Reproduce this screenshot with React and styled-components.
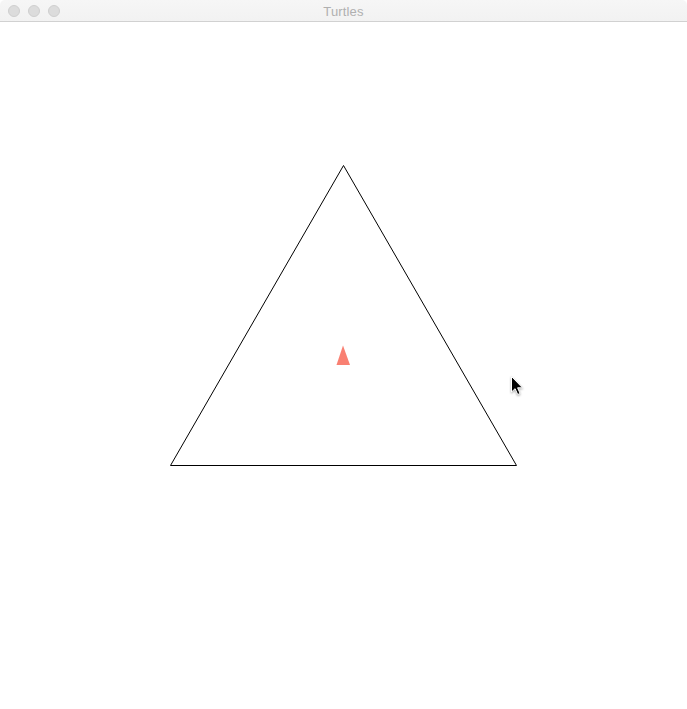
import React from "react";
import styled, { createGlobalStyle } from "styled-components";

const Global = createGlobalStyle`
  html, body { margin: 0; padding: 0; background: #ffffff; overflow: hidden; }
  #root { width: 687px; height: 709px; }
`;

const Window = styled.div`
  width: 687px;
  height: 709px;
  display: flex;
  flex-direction: column;
  background: #ffffff;
`;

const TitleBar = styled.div`
  position: relative;
  height: 21px;
  flex: 0 0 21px;
  background: linear-gradient(#f6f6f6, #f2f2f2);
  border-bottom: 1px solid #d1d1d1;
  border-top-right-radius: 5px;
  border-top-left-radius: 5px;
  display: flex;
  align-items: center;
  justify-content: center;
`;

const Lights = styled.div`
  position: absolute;
  left: 8px;
  top: 5px;
  display: flex;
  gap: 8px;
`;

const Light = styled.span`
  box-sizing: border-box;
  width: 12px;
  height: 12px;
  border-radius: 50%;
  background: #dcdcdc;
  border: 0.5px solid #cfcfcf;
`;

const Title = styled.div`
  font-family: "Liberation Sans", Arial, sans-serif;
  font-size: 13px;
  color: #b0b0b0;
  letter-spacing: 0.15px;
  line-height: 21px;
  padding-top: 1px;
`;

const Canvas = styled.svg`
  display: block;
  flex: 1 1 auto;
  width: 687px;
`;

export default function App() {
  const y0 = 22;
  return (
    <>
      <Global />
      <Window>
        <TitleBar>
          <Lights>
            <Light />
            <Light />
            <Light />
          </Lights>
          <Title>Turtles</Title>
        </TitleBar>
        <Canvas viewBox={`0 ${y0} 687 ${709 - y0}`} height={709 - y0}>
          <polygon
            points="343.5,165.5 170.5,465.5 516.5,465.5"
            fill="none"
            stroke="#000"
            strokeWidth="1"
          />
          <polygon points="343,345.5 336.5,365 350,365" fill="#f98072" />
          <g transform="translate(511.5,376.5)">
            <path
              d="M0 0 L0 15.5 L3.6 12.2 L6.2 18 L8.6 17 L6.1 11.3 L11 11.3 Z"
              fill="#000"
              stroke="#fff"
              strokeWidth="1"
              strokeLinejoin="round"
              style={{ filter: "drop-shadow(0 1px 1px rgba(0,0,0,0.35))" }}
            />
          </g>
        </Canvas>
      </Window>
    </>
  );
}
